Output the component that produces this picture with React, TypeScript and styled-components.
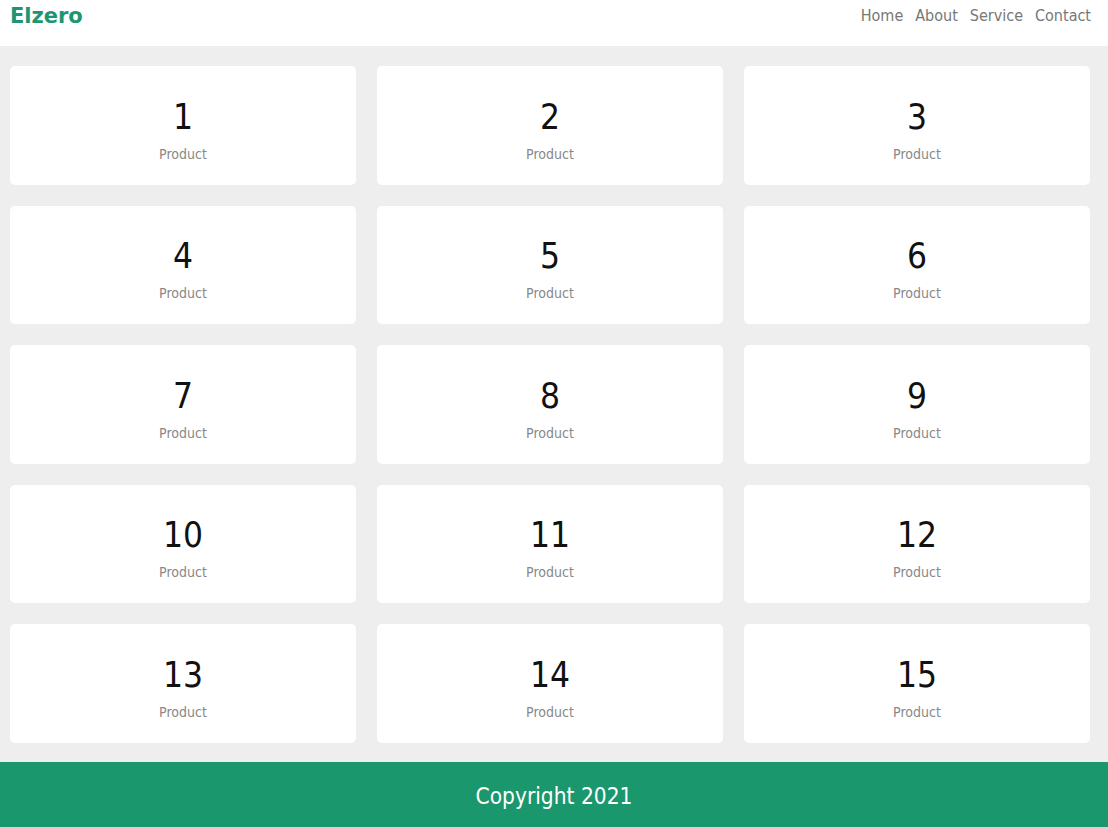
import React from "react";
import styled, { createGlobalStyle } from "styled-components";

const Global = createGlobalStyle`
  * { box-sizing: border-box; }
  body {
    margin: 0;
    background: #eeeeee;
    font-family: "DejaVu Sans Condensed", "DejaVu Sans", Verdana, sans-serif;
  }
`;

const Page = styled.div`
  width: 1108px;
  height: 827px;
  display: flex;
  flex-direction: column;
  background: #eeeeee;
`;

const Header = styled.header`
  height: 46px;
  background: #ffffff;
  display: flex;
  justify-content: space-between;
  align-items: flex-start;
  padding: 3px 17px 0 10px;
`;

const Logo = styled.a`
  font-family: "DejaVu Sans", Verdana, sans-serif;
  font-weight: bold;
  font-size: 21px;
  color: #1b9670;
  text-decoration: none;
  line-height: 26px;
`;

const Nav = styled.nav`
  display: flex;
  gap: 12px;
`;

const NavLink = styled.a`
  font-size: 16px;
  color: #777777;
  text-decoration: none;
  line-height: 26px;
`;

const Grid = styled.main`
  flex: 1;
  display: grid;
  grid-template-columns: repeat(3, 346px);
  grid-auto-rows: 118.5px;
  column-gap: 21px;
  row-gap: 21px;
  padding: 20px 18px 0 10px;
`;

const Card = styled.div`
  background: #ffffff;
  border-radius: 5px;
  display: flex;
  flex-direction: column;
  align-items: center;
  justify-content: center;
  padding-top: 10px;
`;

const Num = styled.h2`
  margin: 0;
  font-weight: normal;
  font-size: 35px;
  color: #111111;
  line-height: 40px;
`;

const Label = styled.p`
  margin: 0;
  font-size: 14px;
  color: #888888;
  line-height: 20px;
  margin-top: 7px;
`;

const Footer = styled.footer`
  height: 65px;
  background: #1b976d;
  color: #ffffff;
  font-size: 22.5px;
  display: flex;
  align-items: center;
  justify-content: center;
  padding-top: 3px;
`;

export default function App() {
  const items = Array.from({ length: 15 }, (_, i) => i + 1);
  return (
    <>
      <Global />
      <Page>
        <Header>
          <Logo href="#">Elzero</Logo>
          <Nav>
            <NavLink href="#">Home</NavLink>
            <NavLink href="#">About</NavLink>
            <NavLink href="#">Service</NavLink>
            <NavLink href="#">Contact</NavLink>
          </Nav>
        </Header>
        <Grid>
          {items.map((n) => (
            <Card key={n}>
              <Num>{n}</Num>
              <Label>Product</Label>
            </Card>
          ))}
        </Grid>
        <Footer>Copyright 2021</Footer>
      </Page>
    </>
  );
}
